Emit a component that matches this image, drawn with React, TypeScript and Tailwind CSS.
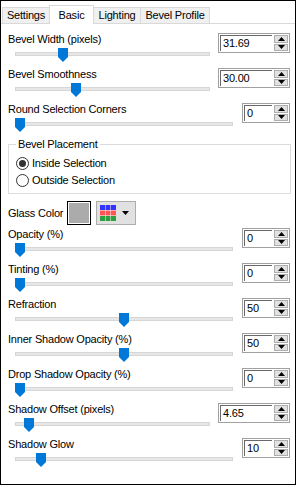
import React from "react";

type Row = {
  label: string;
  value: string;
  wide?: boolean;
  pos: number;
};

const topRows: Row[] = [
  { label: "Bevel Width (pixels)", value: "31.69", wide: true, pos: 43 },
  { label: "Bevel Smoothness", value: "30.00", wide: true, pos: 56 },
  { label: "Round Selection Corners", value: "0", pos: 0 },
];

const bottomRows: Row[] = [
  { label: "Opacity (%)", value: "0", pos: 0 },
  { label: "Tinting (%)", value: "0", pos: 0 },
  { label: "Refraction", value: "50", pos: 104 },
  { label: "Inner Shadow Opacity (%)", value: "50", pos: 104 },
  { label: "Drop Shadow Opacity (%)", value: "0", pos: 0 },
  { label: "Shadow Offset (pixels)", value: "4.65", wide: true, pos: 9 },
  { label: "Shadow Glow", value: "10", pos: 21 },
];

const tabs = ["Settings", "Basic", "Lighting", "Bevel Profile"];

const SpinBox = ({ value, wide }: { value: string; wide?: boolean }) => (
  <div
    className={`flex h-[20px] border border-[#a0a0a0] bg-white p-px ${
      wide ? "w-[72px]" : "w-[48px]"
    }`}
  >
    <div className="flex flex-1 items-center border-l border-t border-[#696969] pl-[2px] leading-none">
      {value}
    </div>
    <div className="ml-[2px] flex w-[14px] flex-col gap-px">
      <div className="flex flex-1 items-center justify-center border border-[#adadad] bg-[#e1e1e1]">
        <svg width="7" height="4" viewBox="0 0 7 4">
          <polygon points="3.5,0 7,4 0,4" fill="#000" />
        </svg>
      </div>
      <div className="flex flex-1 items-center justify-center border border-[#adadad] bg-[#e1e1e1]">
        <svg width="7" height="4" viewBox="0 0 7 4">
          <polygon points="0,0 7,0 3.5,4" fill="#000" />
        </svg>
      </div>
    </div>
  </div>
);

const Slider = ({ pos, wide }: { pos: number; wide?: boolean }) => (
  <div
    className={`relative ml-[7px] mt-[2px] h-[18px] ${
      wide ? "w-[195px]" : "w-[218px]"
    }`}
  >
    <div className="absolute left-0 right-0 top-[4px] h-[4px] border border-[#d6d6d6] bg-[#e7e7e7]" />
    <svg
      className="absolute top-0"
      style={{ left: pos }}
      width="10"
      height="14"
      viewBox="0 0 10 14"
    >
      <polygon points="0,0 10,0 10,9 5,14 0,9" fill="#0078d7" />
    </svg>
  </div>
);

const SliderRow = ({ row }: { row: Row }) => (
  <div className="flex h-[35px] items-start justify-between">
    <div>
      <div className="h-[13px] leading-[13px]">{row.label}</div>
      <Slider pos={row.pos} wide={row.wide} />
    </div>
    <SpinBox value={row.value} wide={row.wide} />
  </div>
);

const Radio = ({ label, checked }: { label: string; checked?: boolean }) => (
  <div className="flex h-[17px] items-center gap-[3px]">
    <div className="flex h-[13px] w-[13px] items-center justify-center rounded-full border border-[#333] bg-white">
      {checked && <div className="h-[7px] w-[7px] rounded-full bg-[#333]" />}
    </div>
    <span>{label}</span>
  </div>
);

export default function App() {
  return (
    <div className="flex h-[485px] w-[296px] flex-col border border-black bg-white font-['Liberation_Sans',Arial,sans-serif] text-[11px] tracking-[-0.2px] text-black">
      <div className="flex h-[22px] items-end pl-px">
        {tabs.map((t) => {
          const active = t === "Basic";
          return (
            <div
              key={t}
              className={
                active
                  ? "relative z-10 -mb-px flex h-[19px] w-[45px] items-center justify-center border border-b-0 border-[#d9d9d9] bg-white"
                  : t === "Settings"
                  ? "flex h-[16px] w-[47px] items-center justify-center border border-b-0 border-r-0 border-[#d9d9d9] bg-[#f0f0f0]"
                  : t === "Lighting"
                  ? "flex h-[16px] w-[47px] items-center justify-center border border-b-0 border-l-0 border-[#d9d9d9] bg-[#f0f0f0]"
                  : "flex h-[16px] w-[69px] items-center justify-center border border-b-0 border-l-0 border-[#d9d9d9] bg-[#f0f0f0]"
              }
            >
              {t}
            </div>
          );
        })}
      </div>
      <div className="flex-1 border-t border-[#d9d9d9] pl-[7px] pr-[5px] pt-[9px]">
        {topRows.map((r) => (
          <SliderRow key={r.label} row={r} />
        ))}

        <div className="relative mt-[6px] h-[50px] w-[283px] border border-[#dcdcdc] pl-[7px] pt-[10px]">
          <span className="absolute -top-[7px] left-[7px] bg-white px-[2px] leading-[13px]">
            Bevel Placement
          </span>
          <Radio label="Inside Selection" checked />
          <Radio label="Outside Selection" />
        </div>

        <div className="mt-[7px] flex h-[24px] items-center">
          <span className="w-[59px]">Glass Color</span>
          <div className="h-[24px] w-[24px] border border-black bg-white p-px">
            <div className="h-full w-full bg-[#ababab]" />
          </div>
          <div className="ml-[5px] flex h-[24px] w-[40px] items-center gap-[6px] border border-[#adadad] bg-[#e1e1e1] pl-[3px]">
            <svg width="16" height="16" viewBox="0 0 16 16">
              <rect x="0" y="0" width="16" height="16" fill="#fff" />
              <rect x="0" y="0" width="5" height="5" fill="#3333ff" />
              <rect x="5.5" y="0" width="5" height="5" fill="#3333ff" />
              <rect x="11" y="0" width="5" height="5" fill="#3333ff" />
              <rect x="0" y="5.5" width="5" height="5" fill="#ff5555" />
              <rect x="5.5" y="5.5" width="5" height="5" fill="#ff5555" />
              <rect x="11" y="5.5" width="5" height="5" fill="#ff5555" />
              <rect x="0" y="11" width="5" height="5" fill="#2e9e40" />
              <rect x="5.5" y="11" width="5" height="5" fill="#2e9e40" />
              <rect x="11" y="11" width="5" height="5" fill="#2e9e40" />
            </svg>
            <svg width="7" height="4" viewBox="0 0 7 4">
              <polygon points="0,0 7,0 3.5,4" fill="#000" />
            </svg>
          </div>
        </div>

        <div className="mt-[3px]">
          {bottomRows.map((r) => (
            <SliderRow key={r.label} row={r} />
          ))}
        </div>
      </div>
    </div>
  );
}
